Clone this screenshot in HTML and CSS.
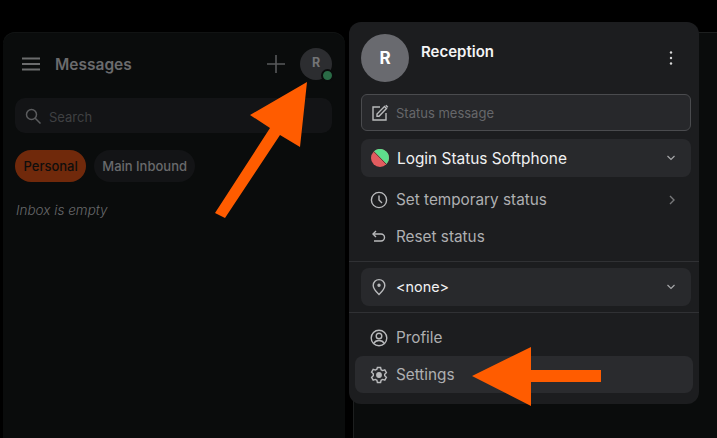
FILE: index.html
```html
<!DOCTYPE html>
<html lang="en">
<head>
<meta charset="utf-8">
<title>Messages</title>
<link rel="stylesheet" href="styles.css">
</head>
<body>
<div class="app">
  <aside class="panel">
    <header class="panel-head">
      <svg class="menu-icon" viewBox="0 0 18 14" width="18" height="14"><path d="M0 1.500h18M0 7h18M0 12.500h18"/></svg>
      <h1 class="panel-title">Messages</h1>
      <svg class="plus-icon" viewBox="0 0 18 18" width="18" height="18"><path d="M9 0v18M0 9h18"/></svg>
      <div class="mini-avatar"><span class="mini-letter">R</span><span class="presence"></span></div>
    </header>
    <div class="search">
      <svg class="search-icon" viewBox="0 0 16 16" width="16" height="16"><circle cx="6.500" cy="6.500" r="5"/><path d="M10.200 10.200 15.500 15.500"/></svg>
      <span>Search</span>
    </div>
    <div class="tabs">
      <span class="tab tab-active">Personal</span>
      <span class="tab">Main Inbound</span>
    </div>
    <p class="empty">Inbox is empty</p>
  </aside>
  <main class="pane"></main>
</div>

<section class="menu">
  <div class="user">
    <div class="avatar">R</div>
    <div class="user-name">Reception</div>
    <svg class="kebab" viewBox="0 0 4 16" width="4" height="16"><circle cx="2" cy="2.500" r="1.200"/><circle cx="2" cy="8" r="1.200"/><circle cx="2" cy="13.500" r="1.200"/></svg>
  </div>
  <div class="status-input">
    <svg class="icon" viewBox="0 0 18 18" width="18" height="18"><path d="M9 3H2v13h13V9"/><path d="M6 12.200V10l7.500-7.500 2 2L8 12.200z"/><path d="M14.800 1.200l2 2"/></svg>
    <span>Status message</span>
  </div>
  <div class="select select-status">
    <svg class="split" viewBox="0 0 18 18" width="18" height="18"><circle cx="9" cy="9" r="9" fill="#e25c5f"/><path d="M3 2.300A9 9 0 0 1 18 9a9 9 0 0 1-2.400 6z" fill="#5edc8c"/><path d="M3 2.800 15.400 15.400" stroke="#1c1d1f" stroke-width="0.600"/></svg>
    <span class="select-label">Login Status Softphone</span>
    <svg class="chev" viewBox="0 0 10 6" width="10" height="6"><path d="M1.500 1l3.500 3.500L8.500 1"/></svg>
  </div>
  <div class="item item-temp">
    <svg class="icon" viewBox="0 0 18 18" width="18" height="18"><circle cx="9" cy="9" r="7.600"/><path d="M9 4.500V9l3 3"/></svg>
    <span class="item-label">Set temporary status</span>
    <svg class="chev-right" viewBox="0 0 6 10" width="6" height="10"><path d="M1 1l4 4-4 4"/></svg>
  </div>
  <div class="item">
    <svg class="icon" viewBox="0 0 18 18" width="18" height="18"><path d="M6 3 3 6l3 3"/><path d="M3.500 6H11a3.500 3.500 0 0 1 0 7H4"/></svg>
    <span class="item-label">Reset status</span>
  </div>
  <hr class="rule">
  <div class="select select-loc">
    <svg class="icon" viewBox="0 0 18 18" width="18" height="18"><path d="M9 16.500C6 13.500 3.200 10.600 3.200 7.400a5.800 5.800 0 0 1 11.600 0c0 3.200-2.800 6.100-5.800 9.100z"/><circle cx="9" cy="7.300" r="1" fill="#b9babc"/></svg>
    <span class="select-label loc-label">&lt;none&gt;</span>
    <svg class="chev" viewBox="0 0 10 6" width="10" height="6"><path d="M1.500 1l3.500 3.500L8.500 1"/></svg>
  </div>
  <hr class="rule">
  <div class="item item-profile">
    <svg class="icon" viewBox="0 0 18 18" width="18" height="18"><circle cx="9" cy="9" r="7.800"/><circle cx="9" cy="7" r="2.800"/><path d="M3.800 14.500c1-2.300 3-3 5.200-3s4.200.7 5.200 3"/></svg>
    <span class="item-label">Profile</span>
  </div>
  <div class="item item-settings">
    <svg class="icon" viewBox="0 0 18 18" width="18" height="18"><path d="M7.400 1.500h3.200l.5 2.200 1.500.9 2.200-.7 1.600 2.800-1.700 1.500v1.600l1.700 1.500-1.600 2.800-2.200-.7-1.500.9-.5 2.200H7.400l-.5-2.200-1.500-.9-2.200.7-1.600-2.800 1.700-1.500V7.700L1.600 6.200l1.600-2.800 2.200.7 1.500-.9z"/><circle cx="9" cy="9" r="2.200" fill="#b9babc"/></svg>
    <span class="item-label">Settings</span>
  </div>
</section>

<svg class="arrows" viewBox="0 0 717 438" width="717" height="438">
  <polygon points="307,82 250,115 270,128 215,213 225,218 280,135 300,147"/>
  <polygon points="472,376 531,347 531,370 601,370 601,382 531,382 531,406"/>
</svg>
</body>
</html>
```
FILE: styles.css
```css
* { box-sizing: border-box; }
html, body { margin: 0; height: 100%; }
body {
  background: #000;
  font-family: Inter, "Noto Sans", sans-serif;
  overflow: hidden;
  position: relative;
}
.app {
  display: flex;
  height: 100%;
  padding: 32px 0 0 3px;
  gap: 8px;
}
.panel {
  width: 342px;
  background: #0a0c0c;
  border-radius: 12px 12px 0 0;
  box-shadow: inset 0 1px 0 #111313;
  padding: 16px 13px 0 12px;
  flex: none;
}
.pane {
  flex: 1;
  background: #0a0c0c;
  border-top: 1px solid #1d1f1f;
  border-left: 1px solid #1d1f1f;
}
.panel-head {
  display: flex;
  align-items: center;
  height: 32px;
  padding-left: 7px;
}
.menu-icon { stroke: #6b6c6d; stroke-width: 1.800; fill: none; flex: none; }
.panel-title {
  margin: 0 0 0 15px;
  flex: 1;
  font-size: 15.500px;
  font-weight: 600;
  color: #6a6b6d;
}
.plus-icon { stroke: #58595b; stroke-width: 1.600; fill: none; margin-right: 15px; }
.mini-avatar {
  position: relative;
  width: 32px;
  height: 32px;
  border-radius: 50%;
  background: #2c2d30;
  color: #737476;
  font-size: 12.500px;
  font-weight: 700;
  display: flex;
  align-items: center;
  justify-content: center;
}
.mini-letter { margin-bottom: 3px; }
.presence {
  position: absolute;
  right: -2px;
  bottom: -2px;
  width: 13px;
  height: 13px;
  border-radius: 50%;
  background: #2a6b46;
  border: 2px solid #0a0c0c;
}
.search {
  margin-top: 18px;
  height: 35px;
  border-radius: 10px;
  background: #131416;
  display: flex;
  align-items: center;
  gap: 8px;
  padding: 2px 0 0 10px;
  color: #3f4042;
  font-size: 13px;
}
.search-icon { stroke: #5b5c5e; stroke-width: 1.500; fill: none; flex: none; margin-top: -2px; }
.tabs {
  display: flex;
  gap: 8px;
  margin-top: 17px;
}
.tab {
  height: 32px;
  padding: 0 8px;
  border-radius: 16px;
  background: #131416;
  color: #696a6c;
  font-size: 13px;
  font-weight: 500;
  line-height: 32px;
}
.tab-active { background: #70290b; color: #0f0e0d; padding: 0 8.500px; }
.empty {
  margin: 20px 0 0 1px;
  color: #68696b;
  font-size: 13.500px;
  font-style: italic;
  font-weight: 300;
}
.menu {
  position: absolute;
  left: 349px;
  top: 22px;
  width: 350px;
  height: 382px;
  background: #1c1d1f;
  border-radius: 12px;
  padding: 12px 0 0;
}
.user {
  display: flex;
  padding: 0 12px;
  height: 48px;
}
.avatar {
  width: 48px;
  height: 48px;
  border-radius: 50%;
  background: #696a6f;
  color: #fff;
  font-size: 17px;
  font-weight: 700;
  display: flex;
  align-items: center;
  justify-content: center;
  flex: none;
}
.user-name {
  flex: 1;
  margin: 8px 0 0 12px;
  color: #f4f4f5;
  font-size: 15px;
  font-weight: 600;
}
.kebab { fill: #d8d8d9; margin: 16px 14px 0 0; }
.status-input {
  margin: 12px 8px 0 12px;
  height: 37px;
  border: 1px solid #4a4b4e;
  border-radius: 6px;
  background: #27282b;
  display: flex;
  align-items: center;
  padding-left: 9px;
  gap: 7px;
  color: #66676a;
  font-size: 13px;
}
.icon { stroke: #b9babc; stroke-width: 1.400; fill: none; flex: none; }
.select {
  margin: 8px 8px 0 12px;
  height: 38px;
  background: #28292c;
  border-radius: 8px;
  display: flex;
  align-items: center;
  padding-left: 9px;
  gap: 8px;
}
.select-label { flex: 1; color: #f1f1f2; font-size: 15.400px; }
.loc-label { font-size: 14.400px; margin-top: -2px; }
.split { flex: none; margin-left: 1px; }
.chev { stroke: #a6a7a9; stroke-width: 1.200; fill: none; margin-right: 15px; }
.chev-right { stroke: #77787a; stroke-width: 1.400; fill: none; margin-right: 2px; }
.item {
  display: flex;
  align-items: center;
  height: 37px;
  margin: 0 6px;
  padding: 0 16px 0 15px;
  gap: 8px;
  color: #aeafb1;
  font-size: 15.300px;
}
.item-temp { margin-top: 4px; }
.item-label { flex: 1; }
.rule {
  margin: 6px 0 0;
  border: 0;
  border-top: 1px solid #303134;
}
.select-loc { margin-top: 6px; }
.select-loc + .rule { margin-top: 6px; }
.item-profile { margin-top: 6px; }
.item-settings {
  background: #2a2b2e;
  border-radius: 8px;
}
.arrows {
  position: absolute;
  left: 0;
  top: 0;
  pointer-events: none;
}
.arrows polygon { fill: #ff5c00; }
```
